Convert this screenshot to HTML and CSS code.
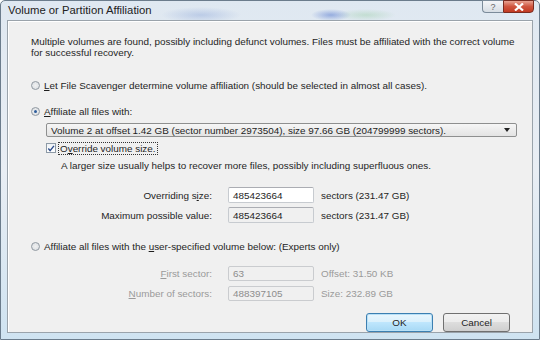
FILE: index.html
```html
<!DOCTYPE html>
<html>
<head>
<meta charset="utf-8">
<link rel="stylesheet" href="styles.css">
</head>
<body>
<div class="window">
  <div class="titlebar">
    <span class="title">Volume or Partition Affiliation</span>
    <div class="caption-btns">
      <span class="cbtn help">?</span>
      <span class="cbtn close">
        <svg width="12" height="8" viewBox="0 0 12 8"><path d="M2 0.5 L10 7.5 M10 0.5 L2 7.5" stroke="#fff" stroke-width="2.2" fill="none"/></svg>
      </span>
    </div>
  </div>
  <div class="client">
    <p class="intro">Multiple volumes are found, possibly including defunct volumes. Files must be affiliated with the correct volume<br>for successful recovery.</p>

    <div class="radio-row r1"><span class="radio"></span><span><u>L</u>et File Scavenger determine volume affiliation (should be selected in almost all cases).</span></div>

    <div class="radio-row r2"><span class="radio on"></span><span><u>A</u>ffiliate all files with:</span></div>
    <div class="select"><span>Volume 2 at offset 1.42 GB (sector number 2973504), size 97.66 GB (204799999 sectors).</span><span class="arrow"></span></div>

    <div class="check-row"><span class="check"><svg width="9" height="9" viewBox="0 0 9 9"><path d="M1.5 4.5 L3.5 7 L7.8 1.5" stroke="#2a4a8a" stroke-width="1.5" fill="none"/></svg></span><span class="focus">O<u>v</u>erride volume size.</span></div>
    <div class="hint">A larger size usually helps to recover more files, possibly including superfluous ones.</div>

    <div class="field-row f1"><span class="lbl">Overriding s<u>i</u>ze:</span><span class="input">485423664</span><span class="after">sectors (231.47 GB)</span></div>
    <div class="field-row f2"><span class="lbl">Maximum possible value:</span><span class="input ro">485423664</span><span class="after">sectors (231.47 GB)</span></div>

    <div class="radio-row r3"><span class="radio"></span><span>Affiliate all files with the <u>u</u>ser-specified volume below: (Experts only)</span></div>

    <div class="field-row f3 dis"><span class="lbl"><u>F</u>irst sector:</span><span class="input ro">63</span><span class="after">Offset: 31.50 KB</span></div>
    <div class="field-row f4 dis"><span class="lbl"><u>N</u>umber of sectors:</span><span class="input ro">488397105</span><span class="after">Size: 232.89 GB</span></div>

    <div class="buttons"><span class="btn ok">OK</span><span class="btn">Cancel</span></div>
  </div>
</div>
</body>
</html>
```
FILE: styles.css
```css
html, body { margin: 0; padding: 0; }
body {
  width: 540px; height: 340px; overflow: hidden;
  font-family: "Liberation Sans", Arial, sans-serif;
  font-size: 9.9px;
  color: #1e1e1e;
}
.window {
  width: 540px; height: 340px;
  display: flex; flex-direction: column;
  background:
    radial-gradient(ellipse 40px 8px at 200px 14px, rgba(120,150,210,0.35), transparent),
    radial-gradient(ellipse 20px 6px at 330px 14px, rgba(60,100,200,0.45), transparent),
    radial-gradient(ellipse 30px 6px at 365px 14px, rgba(140,200,150,0.35), transparent),
    linear-gradient(180deg, #dfe8f1 0%, #e9eef4 50%, #cfe3f1 100%);
  box-sizing: border-box;
  border: 1px solid #6b7c8c;
  border-radius: 5px 5px 0 0;
}
.titlebar {
  height: 19px; display: flex; align-items: flex-start; justify-content: space-between;
  padding-left: 7px;
}
.title {
  font-family: "Liberation Sans", sans-serif; font-size: 11.3px; color: #222;
  padding-top: 3px;
}
.caption-btns { display: flex; margin-right: 5px; margin-top: -1px; }
.cbtn {
  height: 13px; display: flex; align-items: center; justify-content: center;
  border: 1px solid #7b8b9a; box-sizing: border-box;
}
.help {
  width: 21px; border-radius: 0 0 0 4px; border-right: none;
  background: linear-gradient(#f3f5f8, #d7dde4); color: #666; font-size: 9px;
}
.close {
  width: 31px; border-radius: 0 0 4px 0;
  background: linear-gradient(#e8a291 0%, #d0553f 50%, #c23a22 100%);
  border-color: #7a2b20;
}
.client {
  flex: 1; margin: 0 6px 6px 6px;
  background: #f0f0f0;
  border: 1px solid #9aa3ab;
  box-shadow: inset 1px 1px 0 #fff;
  padding: 15px 0 0 0;
  display: flex; flex-direction: column;
  position: relative;
}
.intro { margin: 0 0 0 23px; line-height: 11px; }
u { text-decoration: underline; }
.radio-row { display: flex; align-items: center; margin-left: 23px; height: 12px; }
.r1 { margin-top: 21px; }
.r2 { margin-top: 14px; }
.r3 { margin-top: 17px; }
.radio {
  width: 9px; height: 9px; border-radius: 50%; box-sizing: border-box;
  border: 1px solid #9098a0; background: radial-gradient(circle, #f0f0f0, #d8dde2);
  margin-right: 4px; position: relative;
}
.radio.on::after {
  content: ""; position: absolute; left: 2px; top: 2px; width: 3px; height: 3px; border-radius: 50%;
  background: #2d5d9b;
}
.select {
  margin: 6px 15px 0 38px; height: 14px; box-sizing: border-box;
  border: 1px solid #8e8f8f; border-radius: 2px;
  background: linear-gradient(#f6f6f6, #e3e3e3);
  display: flex; align-items: center; justify-content: space-between; padding: 0 6px 0 4px;
}
.arrow { width: 0; height: 0; border-left: 3px solid transparent; border-right: 3px solid transparent; border-top: 4px solid #222; }
.check-row { display: flex; align-items: center; margin: 5px 0 0 38px; height: 12px; }
.check {
  width: 10px; height: 10px; box-sizing: border-box; border: 1px solid #8d9aa6;
  background: linear-gradient(#eef2f6, #fff); margin-right: 3px; display: flex; align-items: center; justify-content: center;
}
.focus { outline: 1px dotted #333; padding: 0 1px; }
.hint { margin: 6px 0 0 53px; }
.field-row { display: flex; align-items: center; height: 16px; }
.f1 { margin-top: 16px; }
.f2 { margin-top: 4px; }
.f3 { margin-top: 14px; height: 15px; }
.f4 { margin-top: 5px; height: 15px; }
.lbl { width: 220px; text-align: right; padding-right: 16px; box-sizing: border-box; }
.input {
  width: 86px; height: 100%; box-sizing: border-box; border: 1px solid #c7cbd0; border-top-color: #abadb3;
  background: #fff; display: flex; align-items: center; padding-left: 4px; border-radius: 2px;
}
.input.ro { background: #f0f0f0; }
.after { margin-left: 7px; }
.dis { color: #9a9a9a; }
.dis .input { color: #8d8d8d; border-color: #cacccf; }
.buttons { display: flex; justify-content: flex-end; gap: 10px; margin: 12px 22px 0 0; }
.btn {
  width: 67px; height: 19px; box-sizing: border-box; display: flex; align-items: center; justify-content: center;
  border: 1px solid #707070; border-radius: 3px;
  background: linear-gradient(#f2f2f2 0%, #ebebeb 49%, #dddddd 50%, #cfcfcf 100%);
}
.btn.ok {
  border-color: #3c7fb1;
  background: linear-gradient(#eaf6fd 0%, #d9f0fc 49%, #bee6fd 50%, #a7d9f5 100%);
  box-shadow: inset 0 0 0 1px #b9e0f6;
}
```
